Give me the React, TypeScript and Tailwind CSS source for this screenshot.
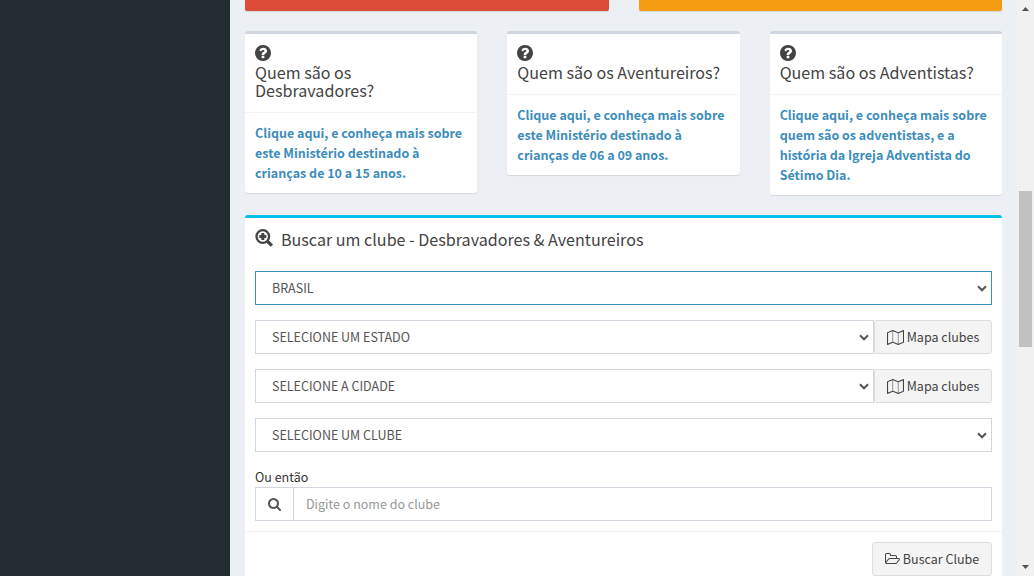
import type { ReactNode } from "react";

const QUESTION =
  "M1024 1376v-192q0-14-9-23t-23-9h-192q-14 0-23 9t-9 23v192q0 14 9 23t23 9h192q14 0 23-9t9-23zm256-672q0-88-55.5-163t-138.5-116-170-41q-243 0-371 213-15 24 8 42l132 100q7 6 19 6 16 0 25-12 53-68 86-92 34-24 86-24 48 0 85.5 26t37.5 59q0 38-20 61t-68 45q-63 28-115.5 86.5t-52.5 125.5v36q0 14 9 23t23 9h192q14 0 23-9t9-23q0-19 21.5-49.5t54.5-49.5q32-18 49-28.5t46-35 44.5-48 28-60.5 12.5-81zm384 192q0 209-103 385.5t-279.5 279.5-385.5 103-385.5-103-279.5-279.5-103-385.5 103-385.5 279.5-279.5 385.5-103 385.5 103 279.5 279.5 103 385.5z";
const SEARCH =
  "M1152 832q0-185-131.5-316.5t-316.5-131.5-316.5 131.5-131.5 316.5 131.5 316.5 316.5 131.5 316.5-131.5 131.5-316.5zm512 832q0 52-38 90t-90 38q-54 0-90-38l-343-342q-179 124-399 124-143 0-273.5-55.5t-225-150-150-225-55.5-273.5 55.5-273.5 150-225 225-150 273.5-55.5 273.5 55.5 225 150 150 225 55.5 273.5q0 220-124 399l343 343q37 37 37 90z";
const FOLDER =
  "M1845 931q0-35-53-35h-1088q-40 0-85.5 21.5t-71.5 52.5l-294 363q-18 24-18 40 0 35 53 35h1088q40 0 86-22t71-53l294-363q18-22 18-39zm-1141-163h768v-160q0-40-28-68t-68-28h-576q-40 0-68-28t-28-68v-64q0-40-28-68t-68-28h-320q-40 0-68 28t-28 68v853l256-315q44-53 116-87.5t140-34.5zm1269 163q0 62-46 120l-295 363q-43 53-116 87.5t-140 34.5h-1088q-92 0-158-66t-66-158v-960q0-92 66-158t158-66h320q92 0 158 66t66 158v32h544q92 0 158 66t66 158v160h192q54 0 99 24.5t67 70.5q15 32 15 68z";
const MAP =
  "M2020 11q28 20 28 53v1408q0 20-11 36t-29 23l-640 256q-24 11-48 0l-616-246-616 246q-10 5-24 5-19 0-36-11-28-20-28-53v-1408q0-20 11-36t29-23l640-256q24-11 48 0l616 246 616-246q32-13 60 6zm-1284 135v1270l576 230v-1270zm-608 217v1270l544-217v-1270zm1792 1070v-1270l-544 217v1270z";

function Icon({ d, box, className }: { d: string; box: string; className: string }) {
  return (
    <svg viewBox={box} className={className} fill="currentColor" aria-hidden="true">
      <path d={d} />
    </svg>
  );
}

function InfoBox({ title, children }: { title: ReactNode; children: ReactNode }) {
  return (
    <section className="min-w-0 flex-1 rounded-[3px] border-t-[3px] border-[#d2d6de] bg-white shadow-[0_1px_1px_rgba(0,0,0,0.1)]">
      <header className="border-b border-[#f4f4f4] px-[10px] pt-[10.5px] pb-[13px] text-[#444]">
        <Icon d={QUESTION} box="128 128 1536 1536" className="mb-[2.5px] block size-4" />
        <h3 className="text-[16.1px] leading-[18px]">{title}</h3>
      </header>
      <a href="#" className="block p-[10px] text-[12.5px] leading-5 font-bold text-[#3c8dbc]">
        {children}
      </a>
    </section>
  );
}

function Select({ value, active }: { value: string; active?: boolean }) {
  return (
    <div className="grid min-w-0 flex-1 items-center">
      <select
        className={
          "col-start-1 row-start-1 h-[34px] w-full appearance-none border bg-white px-4 text-[12.5px] text-[#555] outline-none " +
          (active ? "border-[#3c8dbc]" : "border-[#d2d6de]")
        }
      >
        <option>{value}</option>
      </select>
      <svg
        viewBox="0 0 10 7"
        className="pointer-events-none col-start-1 row-start-1 mr-[5px] h-[7px] w-[10px] justify-self-end"
        aria-hidden="true"
      >
        <path d="M1 1.300l4 4 4-4" fill="none" stroke="#555" strokeWidth="2" />
      </svg>
    </div>
  );
}

function MapButton() {
  return (
    <button className="flex h-[34px] w-[118px] items-center justify-center gap-[3px] rounded-[3px] border border-[#ddd] bg-[#f4f4f4] text-[12.5px] text-[#444]">
      <Icon d={MAP} box="0 0 2048 1792" className="h-[15px] w-[17px]" />
      Mapa clubes
    </button>
  );
}

export default function App() {
  return (
    <div className="flex h-[576px] w-[1034px] overflow-hidden bg-[#ecf0f5] font-['Noto_Sans_CJK_SC',sans-serif] text-[12.5px] text-[#333]">
      <aside className="w-[230px] shrink-0 bg-[#222d32]" />
      <main className="w-[787px] shrink-0 px-[15px]">
        <div className="flex gap-[30px]">
          <div className="h-[11px] flex-1 rounded-b-[2px] bg-[#dd4b39] shadow-[0_1px_1px_rgba(0,0,0,0.1)]" />
          <div className="h-[11px] flex-1 rounded-b-[2px] bg-[#f39c12] shadow-[0_1px_1px_rgba(0,0,0,0.1)]" />
        </div>
        <div className="mt-5 flex items-start gap-[30px]">
          <InfoBox title="Quem são os Desbravadores?">
            Clique aqui, e conheça mais sobre<br />este Ministério destinado à<br />crianças de 10 a 15 anos.
          </InfoBox>
          <InfoBox title="Quem são os Aventureiros?">
            Clique aqui, e conheça mais sobre<br />este Ministério destinado à<br />crianças de 06 a 09 anos.
          </InfoBox>
          <InfoBox title="Quem são os Adventistas?">
            Clique aqui, e conheça mais sobre<br />quem são os adventistas, e a<br />história da Igreja Adventista do<br />Sétimo Dia.
          </InfoBox>
        </div>

        <section className="mt-5 rounded-[3px] border-t-[3px] border-[#00c0ef] bg-white">
          <header className="flex h-[43px] items-start gap-2 px-[10px] pt-[11px] text-[#444]">
            <svg viewBox="0 0 18 18" className="size-[18px]" aria-hidden="true">
              <circle cx="7.8" cy="7.5" r="6.3" fill="none" stroke="currentColor" strokeWidth="2.3" />
              <path d="M6.300 4h3v2h2v3h-2v2h-3V9h-2V6h2z" fill="currentColor" />
              <path d="M12.200 12l4.700 4.700" stroke="currentColor" strokeWidth="3.200" />
            </svg>
            <h3 className="pt-px text-[16.1px] leading-[18px]">Buscar um clube - Desbravadores &amp; Aventureiros</h3>
          </header>
          <div className="flex flex-col gap-[15px] px-[10px] pt-[10px]">
            <div className="flex"><Select value="BRASIL" active /></div>
            <div className="flex"><Select value="SELECIONE UM ESTADO" /><MapButton /></div>
            <div className="flex"><Select value="SELECIONE A CIDADE" /><MapButton /></div>
            <div className="flex"><Select value="SELECIONE UM CLUBE" /></div>
          </div>
          <div className="px-[10px] pt-[15px] pb-[10px]">
            <label className="block leading-5">Ou então</label>
            <div className="flex h-[34px] border border-[#d2d6de]">
              <span className="flex w-[38px] items-center justify-center border-r border-[#d2d6de] text-[#555]">
                <Icon d={SEARCH} box="0 128 1664 1664" className="size-[13px]" />
              </span>
              <input
                placeholder="Digite o nome do clube"
                className="min-w-0 flex-1 px-3 text-[12.5px] outline-none placeholder:text-[#999]"
              />
            </div>
          </div>
          <footer className="flex justify-end border-t border-[#f4f4f4] p-[10px]">
            <button className="flex h-[34px] w-[120px] items-center justify-center gap-[3px] rounded-[3px] border border-[#ddd] bg-[#f4f4f4] text-[12.5px] text-[#444]">
              <Icon d={FOLDER} box="64 0 1920 1792" className="h-[14px] w-[15px]" />
              Buscar Clube
            </button>
          </footer>
        </section>
      </main>
      <div className="flex w-[17px] shrink-0 flex-col items-center bg-[#f1f1f1]">
        <svg viewBox="0 0 17 17" className="size-[17px]" fill="#505050"><path d="M5 11l3.500-4 3.500 4z" /></svg>
        <div className="mt-[174px] h-[156px] w-[13px] bg-[#c1c1c1]" />
        <svg viewBox="0 0 17 17" className="mt-auto size-[17px]" fill="#505050"><path d="M5 6l3.500 4 3.500-4z" /></svg>
      </div>
    </div>
  );
}
